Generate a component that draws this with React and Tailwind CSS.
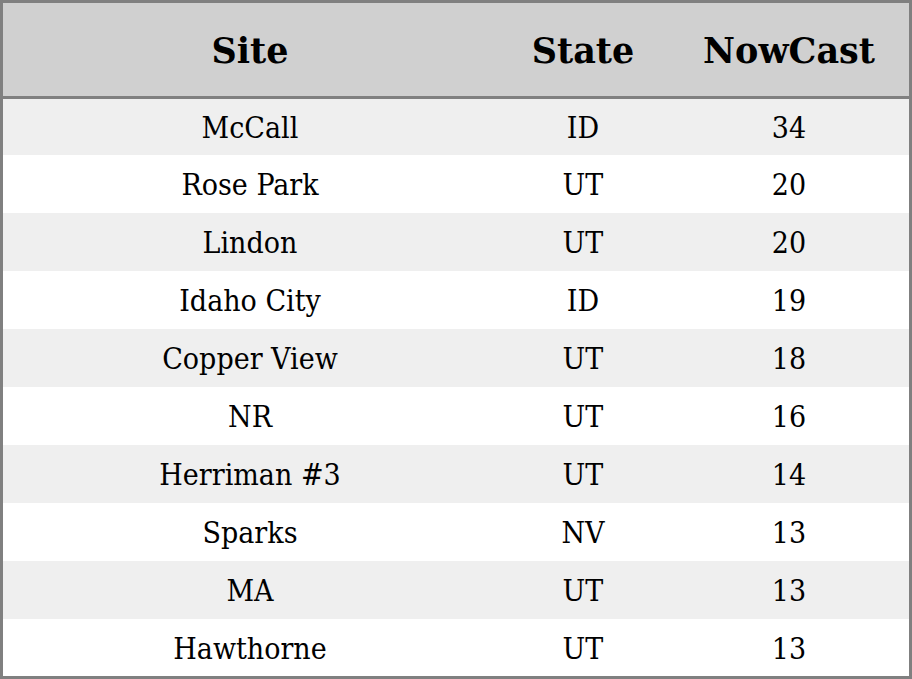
const rows = [
  ["McCall", "ID", 34],
  ["Rose Park", "UT", 20],
  ["Lindon", "UT", 20],
  ["Idaho City", "ID", 19],
  ["Copper View", "UT", 18],
  ["NR", "UT", 16],
  ["Herriman #3", "UT", 14],
  ["Sparks", "NV", 13],
  ["MA", "UT", 13],
  ["Hawthorne", "UT", 13],
];

export default function App() {
  return (
    <div
      className="w-[912px] h-[679px] overflow-hidden bg-white border-[3px] border-[#808080] text-black font-['DejaVu_Serif',serif]"
    >
      <div className="grid grid-cols-[494px_172px_240px] h-[96px] pt-1 items-center bg-[#d0d0d0] border-b-[3px] border-[#808080] text-[35px] font-bold text-center">
        <div>Site</div>
        <div>State</div>
        <div>NowCast</div>
      </div>
      {rows.map(([site, state, value], i) => (
        <div
          key={i}
          className={`grid grid-cols-[494px_172px_240px] items-center text-center text-[30px] font-stretch-condensed font-['DejaVu_Serif_Condensed','DejaVu_Serif',serif] ${
            i === 0 ? "h-[56px]" : "h-[58px]"
          } ${i % 2 === 0 ? "bg-[#efefef]" : "bg-white"}`}
        >
          <div>{site}</div>
          <div>{state}</div>
          <div>{value}</div>
        </div>
      ))}
    </div>
  );
}
